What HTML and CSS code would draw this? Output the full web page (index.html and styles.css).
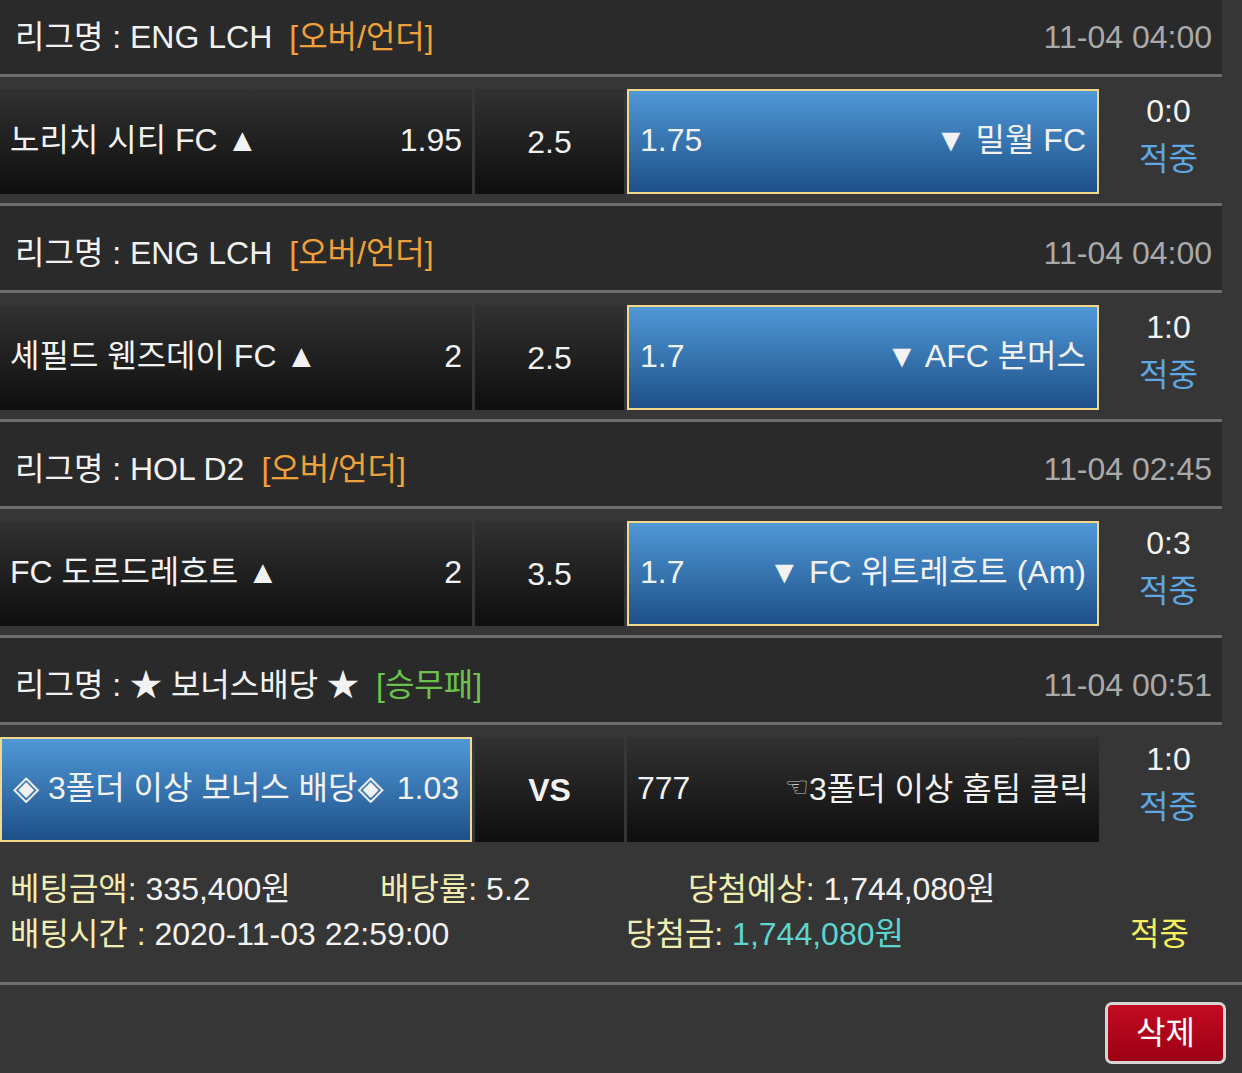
FILE: index.html
```html
<!DOCTYPE html>
<html lang="ko">
<head>
<meta charset="utf-8">
<title>베팅내역</title>
<link rel="stylesheet" href="styles.css">
</head>
<body>
<div class="page">
  <section class="game">
    <div class="league"><span class="lname">리그명 : ENG LCH</span><span class="ltype ou">[오버/언더]</span><span class="ltime">11-04 04:00</span></div>
    <div class="match">
      <div class="cell dark split"><span>노리치 시티 FC ▲</span><span>1.95</span></div>
      <div class="cell dark mid">2.5</div>
      <div class="cell blue split"><span>1.75</span><span>▼ 밀월 FC</span></div>
      <div class="score"><div>0:0</div><div class="hit">적중</div></div>
    </div>
  </section>
  <section class="game">
    <div class="league"><span class="lname">리그명 : ENG LCH</span><span class="ltype ou">[오버/언더]</span><span class="ltime">11-04 04:00</span></div>
    <div class="match">
      <div class="cell dark split"><span>셰필드 웬즈데이 FC ▲</span><span>2</span></div>
      <div class="cell dark mid">2.5</div>
      <div class="cell blue split"><span>1.7</span><span>▼ AFC 본머스</span></div>
      <div class="score"><div>1:0</div><div class="hit">적중</div></div>
    </div>
  </section>
  <section class="game">
    <div class="league"><span class="lname">리그명 : HOL D2</span><span class="ltype ou">[오버/언더]</span><span class="ltime">11-04 02:45</span></div>
    <div class="match">
      <div class="cell dark split"><span>FC 도르드레흐트 ▲</span><span>2</span></div>
      <div class="cell dark mid">3.5</div>
      <div class="cell blue split"><span>1.7</span><span>▼ FC 위트레흐트 (Am)</span></div>
      <div class="score"><div>0:3</div><div class="hit">적중</div></div>
    </div>
  </section>
  <section class="game last">
    <div class="league"><span class="lname">리그명 : ★ 보너스배당 ★</span><span class="ltype wdl">[승무패]</span><span class="ltime">11-04 00:51</span></div>
    <div class="match">
      <div class="cell blue split"><span><span class="dia">◈</span> 3폴더 이상 보너스 배당<span class="dia">◈</span></span><span>1.03</span></div>
      <div class="cell dark mid vs">VS</div>
      <div class="cell dark split"><span>777</span><span><span class="hand">☜</span>3폴더 이상 홈팀 클릭</span></div>
      <div class="score"><div>1:0</div><div class="hit">적중</div></div>
    </div>
  </section>
  <div class="summary">
    <div class="sline">
      <div class="sitem w1"><span class="lbl">베팅금액:</span> 335,400원</div>
      <div class="sitem w2"><span class="lbl">배당률:</span> 5.2</div>
      <div class="sitem"><span class="lbl">당첨예상:</span> 1,744,080원</div>
    </div>
    <div class="sline">
      <div class="sitem w3"><span class="lbl">배팅시간 :</span> 2020-11-03 22:59:00</div>
      <div class="sitem w4"><span class="lbl">당첨금:</span> <span class="win">1,744,080원</span></div>
      <div class="sitem result">적중</div>
    </div>
  </div>
  <div class="actions"><button class="del" type="button">삭제</button></div>
</div>
</body>
</html>
```
FILE: styles.css
```css
html, body {
  margin: 0;
  padding: 0;
  background: #363636;
}
body {
  font-family: "Liberation Sans", "Noto Sans CJK KR", sans-serif;
  font-size: 32px;
  line-height: 40px;
  color: #f2f2f2;
  overflow: hidden;
}
.page {
  margin-top: -10px;
}
.game {
  width: 1222px;
}
.league {
  height: 74px;
  background: #2a2a2a;
  border-bottom: 3px solid #6d6d6d;
  display: flex;
  align-items: center;
  padding: 10px 10px 0 15px;
  box-sizing: content-box;
  width: 1197px;
}
.lname {
  white-space: pre;
}
.ltype {
  margin-left: 17px;
}
.ou { color: #f0a03a; }
.wdl { color: #6cc24c; }
.ltime {
  margin-left: auto;
  color: #a9a9a9;
}
.match {
  display: grid;
  grid-template-columns: 472px 149px 472px 1fr;
  column-gap: 3px;
  padding: 12px 0 9px;
  border-bottom: 3px solid #6d6d6d;
}
.last .match {
  border-bottom: 0;
}
.cell {
  height: 105px;
  box-sizing: border-box;
  display: flex;
  align-items: center;
  white-space: nowrap;
}
.dark {
  background: linear-gradient(#313131, #0f0f0f);
}
.split {
  justify-content: space-between;
  padding: 0 10px 4px;
}
.mid {
  justify-content: center;
  padding-top: 1px;
}
.vs {
  font-weight: bold;
}
.blue {
  background: linear-gradient(#4f98d8, #1e5088);
  border: 2px solid #f2d88c;
  padding: 0 11px 4px;
}
.dia {
  font-family: "DejaVu Sans", sans-serif;
  font-size: 34px;
}
.hand {
  font-family: "DejaVu Sans", sans-serif;
  font-size: 27px;
  color: #c8c8c8;
  vertical-align: 4px;
}
.score {
  text-align: center;
  line-height: 45px;
  padding-left: 13px;
}
.hit {
  color: #5ea6e4;
  padding-top: 3px;
}
.summary {
  padding: 15px 0 26px 10px;
  border-bottom: 3px solid #6d6d6d;
}
.sline {
  display: flex;
  height: 45px;
  align-items: center;
  white-space: nowrap;
}
.lbl { color: #f1edb2; }
.w1 { width: 370px; }
.w2 { width: 308px; }
.w3 { width: 616px; }
.w4 { width: 504px; }
.win { color: #5ed4cf; }
.result { color: #f4ef5a; }
.actions {
  display: flex;
  justify-content: flex-end;
  padding: 17px 16px 0 0;
}
.del {
  width: 121px;
  height: 62px;
  border: 3px solid #d6d6d6;
  border-radius: 7px;
  background: linear-gradient(#c30b22, #9c0015);
  color: #ffffff;
  font-family: "Liberation Sans", "Noto Sans CJK KR", sans-serif;
  font-size: 32px;
  line-height: 40px;
  padding: 0;
}
```
